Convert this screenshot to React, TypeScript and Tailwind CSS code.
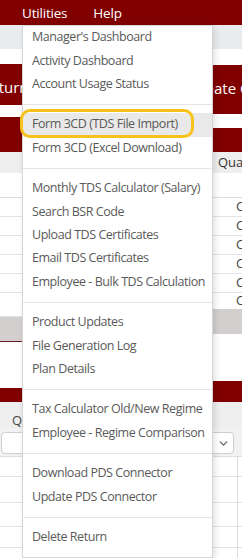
import React from "react";
import { ChevronDown } from "lucide-react";

const font = { fontFamily: '"Open Sans", "Noto Sans", Arial, sans-serif' };

type Entry = { label: string; active?: boolean } | "div";

const items: Entry[] = [
  { label: "Manager's Dashboard" },
  { label: "Activity Dashboard" },
  { label: "Account Usage Status" },
  "div",
  { label: "Form 3CD (TDS File Import)", active: true },
  { label: "Form 3CD (Excel Download)" },
  "div",
  { label: "Monthly TDS Calculator (Salary)" },
  { label: "Search BSR Code" },
  { label: "Upload TDS Certificates" },
  { label: "Email TDS Certificates" },
  { label: "Employee - Bulk TDS Calculation" },
  "div",
  { label: "Product Updates" },
  { label: "File Generation Log" },
  { label: "Plan Details" },
  "div",
  { label: "Tax Calculator Old/New Regime" },
  { label: "Employee - Regime Comparison" },
  "div",
  { label: "Download PDS Connector" },
  { label: "Update PDS Connector" },
  "div",
  { label: "Delete Return" },
];

function Row({ h, text }: { h: string; text?: boolean }) {
  return (
    <div className={`${h} border-b border-[#e3e3e3] flex items-center pl-[236px] text-[13px] text-[#444] whitespace-nowrap`}>
      {text ? "Completed" : null}
    </div>
  );
}

export default function App() {
  return (
    <div className="relative w-[242px] h-[558px] overflow-hidden bg-white" style={font}>
      {/* top nav */}
      <div className="h-[25px] bg-[#800000] flex items-center text-white text-[13.5px] leading-none tracking-[-0.2px]">
        <span className="ml-[22px] mt-[2px]">Utilities</span>
        <span className="ml-[26px] mt-[2px]">Help</span>
      </div>
      <div className="h-[24px] bg-[#e9ecef]" />
      <div className="h-[15px] bg-white" />

      {/* buttons / card headers */}
      <div className="flex">
        <div className="w-[121px] flex flex-col">
          <div className="h-[41px] bg-[#800000] flex items-center text-white text-[15px] whitespace-nowrap overflow-hidden">
            <span className="ml-[-19px] mt-[5px]">Return</span>
          </div>
          <div className="h-[12px] bg-white" />
          <div className="h-[35px] bg-[#800000]" />
        </div>
        <div className="w-[121px] flex flex-col">
          <div className="h-[49px] mt-px bg-[#800000] flex items-center text-white text-[15px] whitespace-nowrap overflow-hidden">
            <span className="pl-[69px] mt-[-3px]">Create Correction</span>
          </div>
          <div className="h-[14px] bg-white" />
          <div className="h-[24px] bg-[#800000]" />
        </div>
      </div>

      {/* table */}
      <div className="h-[21px] bg-[#eeeeee] flex items-center pl-[218px] text-[13px] font-medium text-[#333] whitespace-nowrap">
        Quarter
      </div>
      <div className="h-[24px] bg-white" />
      <div className="h-px bg-[#dcdcdc]" />
      <Row h="h-[19px]" text />
      <Row h="h-[19px]" text />
      <Row h="h-[19px]" text />
      <Row h="h-[19px]" text />
      <Row h="h-[19px]" text />

      <div className="flex">
        <div className="w-[121px] flex flex-col">
          <div className="h-[24px] border-b border-[#e3e3e3]" />
          <div className="h-[25px] bg-[#d3cfcf] border-b border-[#6e1d1d]" />
          <div className="h-[46px] bg-white" />
          <div className="h-[14px] bg-[#800000]" />
        </div>
        <div className="w-[121px] flex flex-col">
          <div className="h-[16px] flex items-center pl-[115px] text-[13px] text-[#444] whitespace-nowrap overflow-hidden">
            Completed
          </div>
          <div className="h-[25px] bg-[#d3cfcf]" />
          <div className="h-[47px] bg-white" />
          <div className="h-[21px] bg-[#800000]" />
        </div>
      </div>

      <div className="h-[26px] bg-[#eeeeee] pt-[12px] pl-[12px] text-[13px] leading-[13px] font-medium text-[#444] whitespace-nowrap">
        Qu
      </div>
      <div className="h-[29px] bg-[#f2f2f2] border-b border-[#dedede] pt-[4px] pl-px">
        <div className="w-[233px] h-[22px] bg-white border border-[#cfcfcf] rounded-[4px] flex items-center justify-end pr-[3px]">
          <ChevronDown size={13} strokeWidth={2.5} className="text-[#666]" />
        </div>
      </div>
      <div className="relative">
        <div className="h-[20px] border-b border-[#e3e3e3]" />
        <div className="h-[26px] border-b border-[#e3e3e3]" />
        <div className="h-[24px] border-b border-[#e3e3e3]" />
        <div className="h-[21px] border-b border-[#e3e3e3]" />
        <div className="h-[20px]" />
        <div className="absolute left-[237px] top-0 bottom-0 w-px bg-[#dedede]" />
      </div>

      {/* dropdown menu */}
      <div className="absolute left-[22px] top-[25px] w-[191px] bg-white border border-[#d5d5d5] shadow-[2px_3px_6px_rgba(0,0,0,0.12)] pb-[8px]">
        {items.map((it, i) =>
          it === "div" ? (
            <div key={i} className="my-[8px] h-px bg-[#e5e5e5]" />
          ) : (
            <div
              key={i}
              className={`h-[23.4px] flex items-center pl-[9px] text-[12.5px] tracking-[-0.45px] text-[#5a5a5a] whitespace-nowrap ${
                it.active ? "bg-[#e9e9e9]" : ""
              }`}
            >
              {it.label}
            </div>
          )
        )}
      </div>

      {/* annotation highlight */}
      <div className="absolute left-[20px] top-[109px] w-[174px] h-[29px] border-[3px] border-[#f7c21b] rounded-[10px]" />
    </div>
  );
}
